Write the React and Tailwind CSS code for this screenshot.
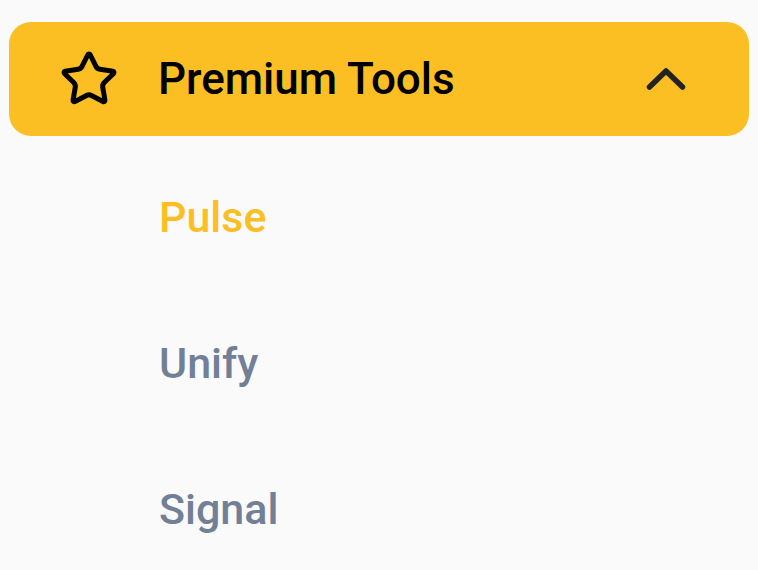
import React from "react";
import { Star } from "lucide-react";

const items = [
  { label: "Pulse", active: true },
  { label: "Unify", active: false },
  { label: "Signal", active: false },
];

export default function App() {
  return (
    <div
      className="h-screen w-full overflow-hidden bg-[#fafafa] px-[9px] pt-[22px]"
      style={{ fontFamily: "Roboto, 'Noto Sans', sans-serif" }}
    >
      <button className="flex h-[114px] w-full items-center rounded-[22px] bg-[#fbbf24] pl-[50px] pr-[63px] text-left">
        <Star size={60} strokeWidth={2} className="shrink-0 text-black" />
        <span className="ml-[39px] flex-1 text-[44px] font-medium leading-none text-black">
          Premium Tools
        </span>
        <svg
          width="40"
          height="24"
          viewBox="0 0 40 24"
          fill="none"
          stroke="#222"
          strokeWidth="5.5"
          strokeLinecap="round"
          strokeLinejoin="round"
          className="shrink-0"
        >
          <polyline points="3.5,20 20,4 36.5,20" />
        </svg>
      </button>

      <nav className="mt-[8px] flex flex-col">
        {items.map((item) => (
          <a
            key={item.label}
            href="#"
            className={
              "flex h-[146px] shrink-0 items-center pl-[150px] text-[43px] font-medium leading-none " +
              (item.active ? "text-[#fbbf24]" : "text-[#718096]")
            }
          >
            {item.label}
          </a>
        ))}
      </nav>
    </div>
  );
}
